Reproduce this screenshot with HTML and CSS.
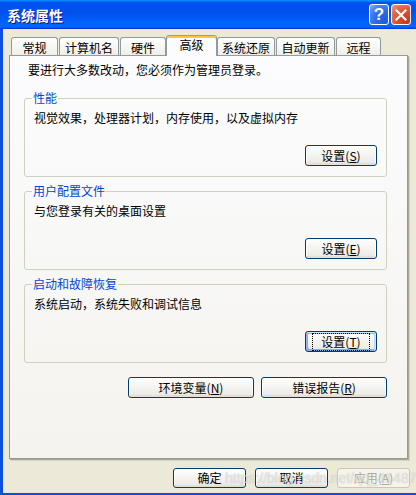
FILE: index.html
```html
<!DOCTYPE html>
<html lang="zh-CN">
<head>
<meta charset="utf-8">
<title>系统属性</title>
<link rel="stylesheet" href="styles.css">
</head>
<body>
<div class="window">
  <div class="titlebar">
    <span class="title">系统属性</span>
    <div class="controls">
      <span class="ctl help">?</span>
      <span class="ctl close"><svg width="12" height="12" viewBox="0 0 12 12"><path d="M1.5 1.5 L10.5 10.5 M10.5 1.5 L1.5 10.5" stroke="#fff" stroke-width="2.2" stroke-linecap="square"/></svg></span>
    </div>
  </div>
  <div class="body">
    <div class="tabs">
      <div class="tab w47">常规</div>
      <div class="tab w60">计算机名</div>
      <div class="tab w46 flush">硬件</div>
      <div class="tab active w51">高级</div>
      <div class="tab w58">系统还原</div>
      <div class="tab w59">自动更新</div>
      <div class="tab w45">远程</div>
    </div>
    <div class="panel">
      <p class="intro">要进行大多数改动，您必须作为管理员登录。</p>
      <fieldset class="group first">
        <legend>性能</legend>
        <p class="desc">视觉效果，处理器计划，内存使用，以及虚拟内存</p>
        <div class="btnrow"><button class="btn">设置(<u>S</u>)</button></div>
      </fieldset>
      <fieldset class="group">
        <legend>用户配置文件</legend>
        <p class="desc">与您登录有关的桌面设置</p>
        <div class="btnrow"><button class="btn">设置(<u>E</u>)</button></div>
      </fieldset>
      <fieldset class="group">
        <legend>启动和故障恢复</legend>
        <p class="desc">系统启动，系统失败和调试信息</p>
        <div class="btnrow"><button class="btn default"><span class="focus">设置(<u>T</u>)</span></button></div>
      </fieldset>
      <div class="extra">
        <button class="btn wide">环境变量(<u>N</u>)</button>
        <button class="btn wide">错误报告(<u>R</u>)</button>
      </div>
    </div>
    <div class="footer">
      <button class="btn foot">确定</button>
      <button class="btn foot">取消</button>
      <button class="btn foot" disabled>应用(<u>A</u>)</button>
    </div>
  </div>
  <span class="watermark">https://blog.csdn.net/qq_41487</span>
</div>
</body>
</html>
```
FILE: styles.css
```css
* { box-sizing: border-box; }
html, body { margin: 0; padding: 0; }
body {
  width: 416px;
  height: 495px;
  overflow: hidden;
  font-family: "Noto Sans CJK SC", "Liberation Sans", sans-serif;
  font-size: 12px;
  color: #000;
}
.window {
  position: relative;
  width: 416px;
  height: 495px;
  display: flex;
  flex-direction: column;
  background: #ece9d8;
  border-left: 3px solid #0b4fe0;
  border-bottom: 2px solid #0b4fe0;
}
.titlebar {
  height: 29px;
  flex: none;
  display: flex;
  align-items: center;
  justify-content: space-between;
  padding: 0 5px 0 4px;
  margin-left: -3px;
  padding-left: 7px;
  background: linear-gradient(180deg, #0997ff 0, #0053ee 8%, #0050ee 40%, #0066ff 88%, #0066ff 93%, #005bff 95%, #003dd7 96%, #003dd7 100%);
}
.title {
  color: #fff;
  font-weight: bold;
  font-size: 14px;
  line-height: 16px;
  text-shadow: 1px 1px #0f1089;
}
.controls { display: flex; gap: 2px; }
.ctl {
  width: 20px;
  height: 21px;
  border: 1px solid #fff;
  border-radius: 3px;
  display: flex;
  align-items: center;
  justify-content: center;
  color: #fff;
}
.help {
  background: radial-gradient(circle at 85% 85%, #1d5be0 0, #2d6ae8 45%, #4c86f0 75%, #8cb2f7 100%);
  font-family: "Liberation Sans", sans-serif;
  font-weight: bold;
  font-size: 17px;
  line-height: 17px;
}
.close {
  background: radial-gradient(circle at 85% 85%, #c6361a 0, #dc4f2c 45%, #e8714f 75%, #f3a58c 100%);
}
.body {
  flex: 1;
  display: flex;
  flex-direction: column;
  padding: 6px 8px 0 6px;
}
.tabs {
  height: 20px;
  display: flex;
  align-items: flex-end;
  padding-left: 2px;
}
.tab {
  position: relative;
  height: 18px;
  margin-right: 1px;
  border: 1px solid #919b9c;
  border-bottom: none;
  border-radius: 3px 3px 0 0;
  background: linear-gradient(180deg, #fff, #fafaf9 26%, #f0f0ea 95%, #ecebe6);
  display: flex;
  align-items: center;
  justify-content: center;
  padding-top: 2px;
  line-height: 14px;
}
.tab.flush { margin-right: 0; }
.tab.active {
  height: 21px;
  margin-bottom: -1px;
  margin-right: 0;
  z-index: 2;
  background: #fcfcfe;
  border-top: 1px solid #e68b2c;
  box-shadow: inset 0 2px #ffc73c;
  padding-top: 0;
  padding-bottom: 3px;
}
.w45 { width: 45px; }
.w46 { width: 46px; }
.w47 { width: 47px; }
.w51 { width: 51px; }
.w58 { width: 58px; }
.w59 { width: 59px; }
.w60 { width: 60px; }
.panel {
  position: relative;
  z-index: 1;
  height: 404px;
  flex: none;
  border: 1px solid #919b9c;
  background: linear-gradient(180deg, #fcfcfe, #f4f3ee);
  box-shadow: 1px 1px #aca899, 2px 2px #d6d2c2;
  padding: 7px 20px 0 14px;
}
.intro {
  margin: 0 0 0 4px;
  line-height: 14px;
}
.group {
  margin: 7px 0 0;
  padding: 6px 9px 10px 9px;
  border: 1px solid #d0d0bf;
  border-radius: 3px;
  min-width: 0;
}
.group.first { margin-top: 14px; }
.group legend {
  color: #0046d5;
  line-height: 14px;
  padding: 0 1px;
  margin-left: -2px;
}
.desc {
  margin: 0;
  line-height: 14px;
}
.btnrow {
  display: flex;
  justify-content: flex-end;
  margin-top: 20px;
}
.btn {
  font-family: "Noto Sans CJK SC", "Liberation Sans", sans-serif;
  font-size: 12px;
  color: #000;
  width: 72px;
  height: 21px;
  padding: 0;
  line-height: 14px;
  border: 1px solid #003c74;
  border-radius: 3px;
  background: linear-gradient(180deg, #fff, #ecebe6 86%, #d6d0c5);
  box-shadow: inset -1px 1px #fff, inset 1px 2px #fff, inset -1px -1px #e3e0d5;
}
.btn u { text-underline-offset: 1px; }
.btn.default {
  box-shadow: inset -1px 1px #cee7ff, inset 1px 2px #98b8ea, inset -2px 2px #bcd4f6, inset 1px -1px #89ade4, inset 2px -2px #89ade4;
}
.focus {
  display: inline-block;
  outline: 1px dotted #000;
  outline-offset: 1px;
  padding: 0 7px;
}
.extra {
  display: flex;
  justify-content: flex-end;
  gap: 7px;
  margin-top: 14px;
}
.btn.wide { width: 126px; }
.footer {
  display: flex;
  justify-content: flex-end;
  gap: 9px;
  margin-top: 9px;
  margin-right: -2px;
}
.btn.foot { width: 73px; height: 20px; }
.btn:disabled {
  color: #aca899;
  border-color: #c9c7ba;
  background: #f5f4ea;
  box-shadow: none;
}
.watermark {
  position: absolute;
  left: 222px;
  top: 470px;
  font-family: "Liberation Sans", sans-serif;
  font-size: 14px;
  line-height: 16px;
  color: rgba(255, 255, 255, 0.55);
  text-shadow: 0 0 1px rgba(110, 110, 110, 0.45);
  white-space: nowrap;
  pointer-events: none;
}
```
